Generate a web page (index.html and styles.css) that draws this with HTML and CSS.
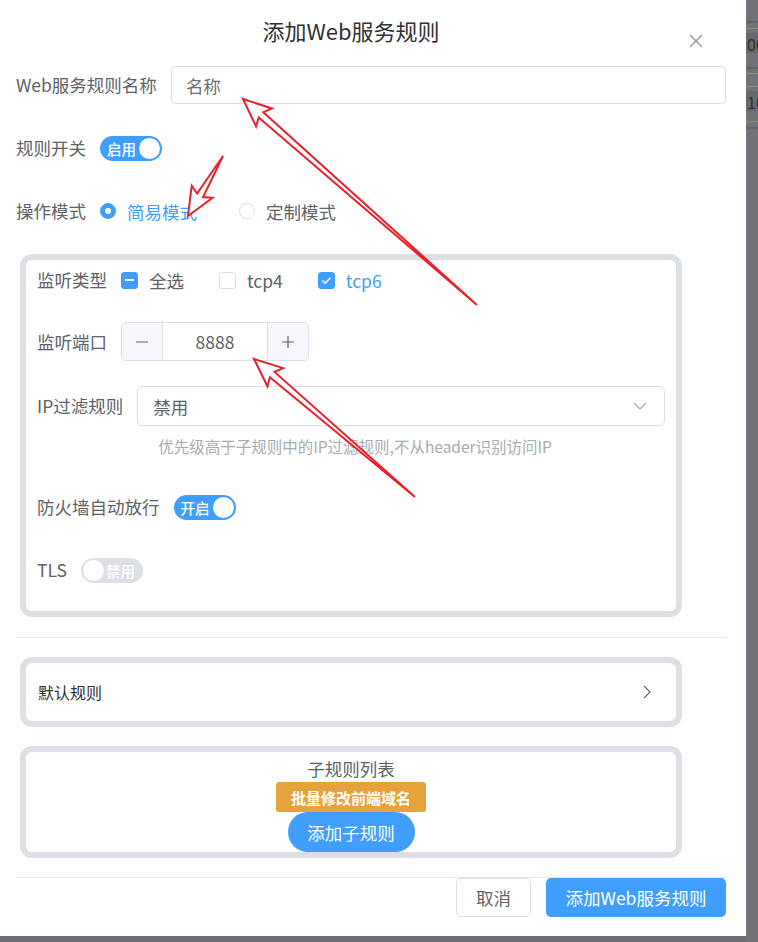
FILE: index.html
```html
<!DOCTYPE html>
<html lang="zh-CN">
<head>
    <meta charset="UTF-8">
    <meta name="viewport" content="width=device-width, initial-scale=1.0">
    <title>添加Web服务规则</title>
    <link rel="stylesheet" href="styles.css">
</head>
<body>
    <div class="screen">
        <div class="dialog">
            <div class="dialog-header">
                <span class="dialog-title">添加Web服务规则</span>
                <button type="button" class="dialog-close" aria-label="关闭">
                    <svg width="14" height="14" viewBox="0 0 14 14"><path d="M1 1L13 13M13 1L1 13" stroke="#909399" stroke-width="1.3" fill="none"/></svg>
                </button>
            </div>

            <div class="dialog-body">
                <div class="form-item">
                    <label class="form-label" for="ruleName">Web服务规则名称</label>
                    <input type="text" id="ruleName" class="text-input" placeholder="名称">
                </div>

                <div class="form-item">
                    <span class="form-label">规则开关</span>
                    <span class="switch is-on"><span class="switch-text">启用</span><span class="switch-knob"></span></span>
                </div>

                <div class="form-item mode-item">
                    <span class="form-label">操作模式</span>
                    <span class="radio is-checked"><span class="radio-dot"></span>简易模式</span>
                    <span class="radio"><span class="radio-dot"></span>定制模式</span>
                </div>

                <!-- listen settings -->
                <div class="panel panel-form">
                    <div class="form-item type-item">
                        <span class="form-label">监听类型</span>
                        <span class="check is-indeterminate"><span class="check-box"></span>全选</span>
                        <span class="check"><span class="check-box"></span>tcp4</span>
                        <span class="check is-checked"><span class="check-box"><svg width="11" height="9" viewBox="0 0 11 9"><path d="M1.5 4.5L4.2 7.2L9.5 1.8" stroke="#fff" stroke-width="1.4" fill="none"/></svg></span>tcp6</span>
                    </div>

                    <div class="form-item">
                        <span class="form-label">监听端口</span>
                        <div class="number-input">
                            <span class="number-btn minus"><svg width="14" height="14" viewBox="0 0 14 14"><path d="M1 7H13" stroke="#606266" stroke-width="1.2"/></svg></span>
                            <span class="number-value">8888</span>
                            <span class="number-btn plus"><svg width="14" height="14" viewBox="0 0 14 14"><path d="M1 7H13M7 1V13" stroke="#606266" stroke-width="1.2"/></svg></span>
                        </div>
                    </div>

                    <div class="form-item ip-item">
                        <span class="form-label">IP过滤规则</span>
                        <div class="form-content">
                            <div class="select-box">
                                <span>禁用</span>
                                <svg width="14" height="8" viewBox="0 0 14 8"><path d="M1 1L7 7L13 1" stroke="#a8abb2" stroke-width="1.2" fill="none"/></svg>
                            </div>
                            <div class="form-hint">优先级高于子规则中的IP过滤规则,不从header识别访问IP</div>
                        </div>
                    </div>

                    <div class="form-item">
                        <span class="form-label">防火墙自动放行</span>
                        <span class="switch is-on"><span class="switch-text">开启</span><span class="switch-knob"></span></span>
                    </div>

                    <div class="form-item last-item">
                        <span class="form-label">TLS</span>
                        <span class="switch"><span class="switch-knob"></span><span class="switch-text">禁用</span></span>
                    </div>
                </div>

                <div class="divider"></div>

                <div class="panel panel-collapse">
                    <span>默认规则</span>
                    <svg width="8" height="14" viewBox="0 0 8 14"><path d="M1 1L7 7L1 13" stroke="#606266" stroke-width="1.1" fill="none"/></svg>
                </div>

                <div class="panel panel-rules">
                    <div class="rules-title">子规则列表</div>
                    <button type="button" class="btn-warning">批量修改前端域名</button>
                    <button type="button" class="btn-round">添加子规则</button>
                </div>

                <div class="dialog-footer">
                    <button type="button" class="btn btn-default">取消</button>
                    <button type="button" class="btn btn-primary">添加Web服务规则</button>
                </div>
            </div>
        </div>

        <div class="backdrop-strip">
            <div class="strip-row" style="height:21px"></div>
            <div class="strip-line dark"></div>
            <div class="strip-row" style="height:5px"></div>
            <div class="strip-line green"></div>
            <div class="strip-row" style="height:4px"></div>
            <div class="strip-cell">00</div>
            <div class="strip-row" style="height:14px"></div>
            <div class="strip-line dark"></div>
            <div class="strip-row" style="height:4px"></div>
            <div class="strip-line green"></div>
            <div class="strip-row" style="height:12px"></div>
            <div class="strip-line green"></div>
            <div class="strip-row" style="height:4px"></div>
            <div class="strip-cell">10</div>
            <div class="strip-row" style="height:10px"></div>
            <div class="strip-line green"></div>
            <div class="strip-row" style="height:5px"></div>
            <div class="strip-line dark"></div>
        </div>

        <!-- screenshot annotations -->
        <svg class="annotations" width="758" height="942" viewBox="0 0 758 942">
            <polygon points="243,99 256.1,126.5 258.7,117.5 477,305 263.3,112.3 271.9,108.5"/>
            <polygon points="188,216 212.5,197.8 203.1,197.1 223,156 197.1,193.5 191.7,185.8"/>
            <polygon points="254,359 267.5,386.3 269.9,377.3 415,497 274.5,371.9 283.1,368.1"/>
        </svg>
    </div>
</body>
</html>
```

FILE: styles.css
```css
* {
    margin: 0;
    padding: 0;
    box-sizing: border-box;
}

body {
    font-family: "Noto Sans CJK SC", "Noto Sans", sans-serif;
    background: #6e7073;
    color: #606266;
    overflow: hidden;
}

button {
    font-family: inherit;
    border: none;
    cursor: pointer;
}

.screen {
    position: relative;
    display: flex;
    width: 758px;
    height: 942px;
}

.dialog {
    flex: none;
    width: 746px;
    height: 936px;
    background: #fff;
}

/* header */
.dialog-header {
    position: relative;
    height: 60px;
    padding-right: 44px;
    text-align: center;
}

.dialog-title {
    font-size: 22px;
    line-height: 60px;
    color: #303133;
}

.dialog-close {
    position: absolute;
    left: 689px;
    top: 34px;
    width: 14px;
    height: 14px;
    background: none;
    display: flex;
}

.dialog-body {
    padding: 6px 20px 0 16px;
}

/* form rows */
.form-item {
    display: flex;
    align-items: center;
    min-height: 38px;
    margin-bottom: 25px;
}

.form-label {
    flex: none;
    margin-right: 14px;
    font-size: 17.5px;
    line-height: 38px;
    color: #606266;
}

.text-input {
    flex: 1;
    height: 38px;
    padding: 0 14px;
    border: 1px solid #dcdfe6;
    border-radius: 5px;
    font-family: inherit;
    font-size: 17.5px;
    color: #606266;
    outline: none;
}

.text-input::placeholder {
    color: #6b6e73;
}

.mode-item {
    margin-bottom: 24px;
}

/* switch */
.switch {
    display: inline-flex;
    align-items: center;
    justify-content: space-between;
    width: 62px;
    height: 25px;
    padding: 0 2px;
    border-radius: 13px;
    background: #dcdfe6;
}

.switch.is-on {
    background: #409eff;
    padding-left: 7px;
}

.switch-text {
    font-size: 14.5px;
    font-weight: 500;
    line-height: 25px;
    color: #fff;
}

.switch:not(.is-on) .switch-text {
    margin-right: 6px;
}

.switch-knob {
    width: 21px;
    height: 21px;
    border-radius: 50%;
    background: #fff;
}

/* radio */
.radio {
    display: inline-flex;
    align-items: center;
    gap: 11px;
    margin-right: 42px;
    font-size: 17.5px;
    color: #606266;
}

.radio.is-checked {
    color: #409eff;
}

.radio-dot {
    display: flex;
    align-items: center;
    justify-content: center;
    width: 16px;
    height: 16px;
    border: 1px solid #dcdfe6;
    border-radius: 50%;
    background: #fff;
}

.radio.is-checked .radio-dot {
    background: #409eff;
    border-color: #409eff;
}

.radio.is-checked .radio-dot::after {
    content: "";
    width: 6px;
    height: 6px;
    border-radius: 50%;
    background: #fff;
}

/* checkbox */
.check {
    display: inline-flex;
    align-items: center;
    gap: 11px;
    margin-right: 35px;
    font-size: 17.5px;
    color: #606266;
}

.check.is-checked {
    color: #409eff;
}

.check-box {
    display: flex;
    align-items: center;
    justify-content: center;
    width: 17px;
    height: 17px;
    border: 1px solid #dcdfe6;
    border-radius: 3px;
    background: #fff;
}

.check.is-checked .check-box,
.check.is-indeterminate .check-box {
    background: #409eff;
    border-color: #409eff;
}

.check.is-indeterminate .check-box::after {
    content: "";
    width: 9px;
    height: 2px;
    background: #fff;
}

/* panels */
.panel {
    width: 662px;
    margin-left: 4px;
    border: 6px solid #dcdfe6;
    border-radius: 12px;
    background: #fff;
}

.panel-form {
    padding: 1px 11px 22px;
}

.type-item {
    margin-bottom: 23px;
}

.number-input {
    display: flex;
    width: 188px;
    height: 39px;
    border: 1px solid #dcdfe6;
    border-radius: 5px;
    overflow: hidden;
}

.number-btn {
    display: flex;
    align-items: center;
    justify-content: center;
    width: 41px;
    background: #f5f7fa;
}

.number-btn.minus {
    border-right: 1px solid #dcdfe6;
}

.number-btn.plus {
    border-left: 1px solid #dcdfe6;
}

.number-value {
    flex: 1;
    text-align: center;
    font-size: 17.5px;
    line-height: 37px;
    color: #606266;
}

.ip-item {
    align-items: flex-start;
    margin-bottom: 32px;
}

.ip-item .form-label {
    line-height: 40px;
}

.form-content {
    flex: 1;
}

.select-box {
    display: flex;
    align-items: center;
    justify-content: space-between;
    height: 40px;
    padding: 0 17px 0 15px;
    border: 1px solid #dcdfe6;
    border-radius: 5px;
    font-size: 17.5px;
    color: #606266;
}

.form-hint {
    margin-top: 10px;
    padding-left: 21px;
    font-size: 15.5px;
    line-height: 20px;
    color: #a8abb2;
}

.last-item {
    margin-bottom: 0;
}

.divider {
    height: 1px;
    margin-top: 20px;
    background: #e4e7ed;
}

.panel-collapse {
    display: flex;
    align-items: center;
    justify-content: space-between;
    height: 70px;
    margin-top: 19px;
    padding: 0 25px 0 12px;
    font-size: 16px;
    color: #303133;
}

.panel-rules {
    display: flex;
    flex-direction: column;
    align-items: center;
    height: 112px;
    margin-top: 19px;
    padding-top: 3px;
}

.rules-title {
    font-size: 17.5px;
    line-height: 27px;
    color: #606266;
}

.btn-warning {
    width: 150px;
    height: 30px;
    border-radius: 3px;
    background: #e6a23c;
    color: #fff;
    font-size: 15px;
    font-weight: bold;
}

.btn-round {
    width: 127px;
    height: 40px;
    border-radius: 20px;
    background: #409eff;
    color: #fff;
    font-size: 17.5px;
}

/* footer */
.dialog-footer {
    display: flex;
    justify-content: flex-end;
    gap: 15px;
    margin-top: 19px;
    border-top: 1px solid #e4e7ed;
}

.btn {
    height: 39px;
    border-radius: 5px;
    font-size: 17.5px;
}

.btn-default {
    width: 75px;
    border: 1px solid #dcdfe6;
    background: #fff;
    color: #606266;
}

.btn-primary {
    width: 180px;
    background: #409eff;
    color: #fff;
}

/* page behind the overlay */
.backdrop-strip {
    flex: 1;
    display: flex;
    flex-direction: column;
    overflow: hidden;
    background: #707276;
}

.strip-line {
    height: 2px;
}

.strip-line.dark {
    background: #616366;
}

.strip-line.green {
    height: 1px;
    background: #7d9676;
}

.strip-cell {
    height: 20px;
    padding-left: 1px;
    background: #66686b;
    font-size: 16px;
    line-height: 22px;
    color: #2c2e30;
    white-space: nowrap;
}

.annotations {
    position: absolute;
    left: 0;
    top: 0;
    pointer-events: none;
}

.annotations polygon {
    fill: #fff;
    stroke: #e8212a;
    stroke-width: 2;
    stroke-linejoin: miter;
}
```
